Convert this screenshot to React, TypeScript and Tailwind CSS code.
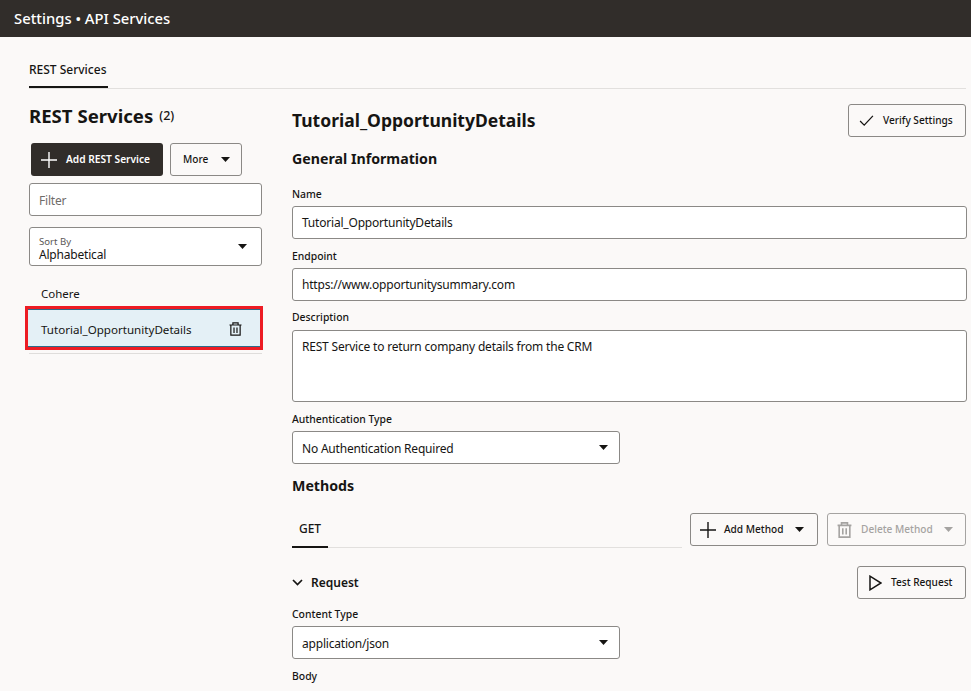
import { ReactNode } from 'react';

function Caret({ color = '#161513' }: { color?: string }) {
  return (
    <svg width="9" height="5" viewBox="0 0 9 5" className="shrink-0">
      <path d="M0 0h9L4.5 5z" fill={color} />
    </svg>
  );
}

function PlusIcon({ color }: { color: string }) {
  return (
    <svg width="16" height="16" viewBox="0 0 16 16" fill="none" stroke={color} strokeWidth="1.4">
      <path d="M8 0v16M0 8h16" />
    </svg>
  );
}

function TrashIcon({ color = '#161513', size = 13, weight = 1.3 }: { color?: string; size?: number; weight?: number }) {
  return (
    <svg width={size} height={size + 1} viewBox="0 0 14 15" fill="none" stroke={color} strokeWidth={weight}>
      <path d="M0.5 3.2h13M4.2 3V0.8h5.6V3M2 3.2v11h10v-11M5.4 5.8v6M8.6 5.8v6" />
    </svg>
  );
}

function Label({ children }: { children: ReactNode }) {
  return <div className="text-[10.4px] font-medium leading-[14px] text-[#161513]">{children}</div>;
}

function Field({ children, className }: { children: ReactNode; className: string }) {
  return (
    <div className={`flex items-center justify-between rounded-[3px] border border-[#8b8986] bg-white pl-[9px] pr-[11px] text-[12px] tracking-[-0.2px] text-[#161513] ${className}`}>
      {children}
    </div>
  );
}

function OutlineButton({ children, className }: { children: ReactNode; className: string }) {
  return (
    <div className={`flex h-[33px] shrink-0 items-center rounded-[3px] border border-[#8b8986] text-[10.1px] font-medium text-[#161513] ${className}`}>
      {children}
    </div>
  );
}

export default function App() {
  return (
    <div className="h-[691px] w-[971px] overflow-hidden bg-[#fbf9f8] font-['Noto_Sans',sans-serif] text-[#161513]">
      <header className="flex h-[37px] items-center bg-[#312d2a] pl-[14px] text-[14.8px] font-medium text-white">
        Settings • API Services
      </header>

      <div className="pl-[29px] pr-[5px]">
        {/* tab bar */}
        <div className="h-[52px] border-b border-[#e2e0de] pt-[24px]">
          <div className="flex h-[27px] w-[79px] items-start whitespace-nowrap border-b-2 border-[#161513] text-[12px] font-medium leading-[18px]">
            REST Services
          </div>
        </div>

        <div className="flex">
          {/* left list */}
          <aside className="w-[233px] shrink-0 pt-[15px]">
            <div className="flex h-[24px] items-center gap-[6px]">
              <span className="text-[18.6px] font-bold">REST Services</span>
              <span className="text-[12.5px] font-medium">(2)</span>
            </div>
            <div className="mt-[15px] flex gap-[7px] pl-[2px]">
              <div className="flex h-[33px] w-[132px] items-center gap-[9px] rounded-[3px] bg-[#312d2a] pl-[10px] text-[10.2px] font-semibold text-white">
                <PlusIcon color="#ffffff" />
                Add REST Service
              </div>
              <OutlineButton className="w-[72px] justify-between pl-[12px] pr-[11px]">
                More
                <Caret />
              </OutlineButton>
            </div>
            <Field className="mt-[7px] h-[33px]">
              <span className="pt-[2px] text-[#6f6c69]">Filter</span>
            </Field>
            <Field className="mt-[11px] h-[39px]">
              <div className="pt-[2px]">
                <div className="text-[9.6px] leading-[13px] tracking-normal text-[#5b5855]">Sort By</div>
                <div className="text-[12px] leading-[13px]">Alphabetical</div>
              </div>
              <span className="mr-[3px]"><Caret /></span>
            </Field>
            <div className="mt-[19px] pl-[12px] text-[11.5px] leading-[18px]">Cohere</div>
            <div className="mt-[3px] border-b border-[#dfdddb] pb-[3px]">
              <div className="-ml-[4px] -mr-[1px] border-[3px] border-[#ed1c24]">
                <div className="flex h-[38px] items-center justify-between border-y border-[#2b6b8a] bg-[#e4f0f6] pl-[13px] pr-[18px] text-[11.6px]">
                  <span className="pt-[4px]">Tutorial_OpportunityDetails</span>
                  <span className="pt-[2px]"><TrashIcon /></span>
                </div>
              </div>
            </div>
          </aside>

          {/* detail form */}
          <main className="ml-[30px] flex-1 pt-[15px]">
            <div className="flex h-[33px] items-center justify-between pr-[1px]">
              <h1 className="text-[17.5px] font-bold">Tutorial_OpportunityDetails</h1>
              <OutlineButton className="w-[118px] gap-[9px] pl-[10px]">
                <svg width="15" height="11" viewBox="0 0 16 12" fill="none" stroke="#161513" strokeWidth="1.4">
                  <path d="M1 6.5L5.5 11L15 1" />
                </svg>
                Verify Settings
              </OutlineButton>
            </div>
            <h2 className="mt-[11px] text-[14.2px] font-bold leading-[22px]">General Information</h2>

            <div className="mt-[17px]"><Label>Name</Label></div>
            <Field className="mt-[5px] h-[33px]"><span className="pt-[1px]">Tutorial_OpportunityDetails</span></Field>
            <div className="mt-[10px]"><Label>Endpoint</Label></div>
            <Field className="mt-[5px] h-[33px]"><span className="pt-[1px]">https://www.opportunitysummary.com</span></Field>
            <div className="mt-[9px]"><Label>Description</Label></div>
            <Field className="mt-[6px] h-[72px] !items-start pt-[7px]">REST Service to return company details from the CRM</Field>
            <div className="mt-[10px]"><Label>Authentication Type</Label></div>
            <Field className="mt-[5px] h-[33px] w-[328px]">
              <span className="pt-[2px]">No Authentication Required</span>
              <Caret />
            </Field>
            <h2 className="mt-[11px] text-[14.2px] font-bold leading-[22px]">Methods</h2>

            <div className="mt-[16px] flex items-start pr-[1px]">
              <div className="h-[35px] w-[390px] border-b border-[#e2e0de]">
                <div className="h-[35px] w-[36px] border-b-2 border-[#161513] pt-[7px] text-center text-[12px] font-medium leading-[18px]">GET</div>
              </div>
              <OutlineButton className="ml-[8px] w-[128px] gap-[8px] pl-[9px]">
                <PlusIcon color="#161513" />
                Add Method
                <span className="ml-[4px]"><Caret /></span>
              </OutlineButton>
              <OutlineButton className="ml-[9px] w-[139px] gap-[9px] !border-[#a5a3a1] pl-[9px] !text-[#a5a3a1]">
                <TrashIcon color="#a5a3a1" size={15} weight={1.5} />
                Delete Method
                <span className="ml-[2px]"><Caret color="#a5a3a1" /></span>
              </OutlineButton>
            </div>

            <div className="mt-[18px] flex h-[33px] items-center justify-between pr-[1px]">
              <div className="flex items-center gap-[8px] text-[12px] font-semibold">
                <svg width="11" height="7" viewBox="0 0 11 7" fill="none" stroke="#161513" strokeWidth="1.7">
                  <path d="M1 1l4.5 4.5L10 1" />
                </svg>
                Request
              </div>
              <OutlineButton className="w-[109px] gap-[9px] pl-[11px]">
                <svg width="13" height="16" viewBox="0 0 13 16" fill="none" stroke="#161513" strokeWidth="1.5">
                  <path d="M1 1.2v13.6L12 8z" />
                </svg>
                Test Request
              </OutlineButton>
            </div>

            <div className="mt-[8px]"><Label>Content Type</Label></div>
            <Field className="mt-[5px] h-[33px] w-[328px]">
              <span className="pt-[2px]">application/json</span>
              <Caret />
            </Field>
            <div className="mt-[10px]"><Label>Body</Label></div>
          </main>
        </div>
      </div>
    </div>
  );
}
